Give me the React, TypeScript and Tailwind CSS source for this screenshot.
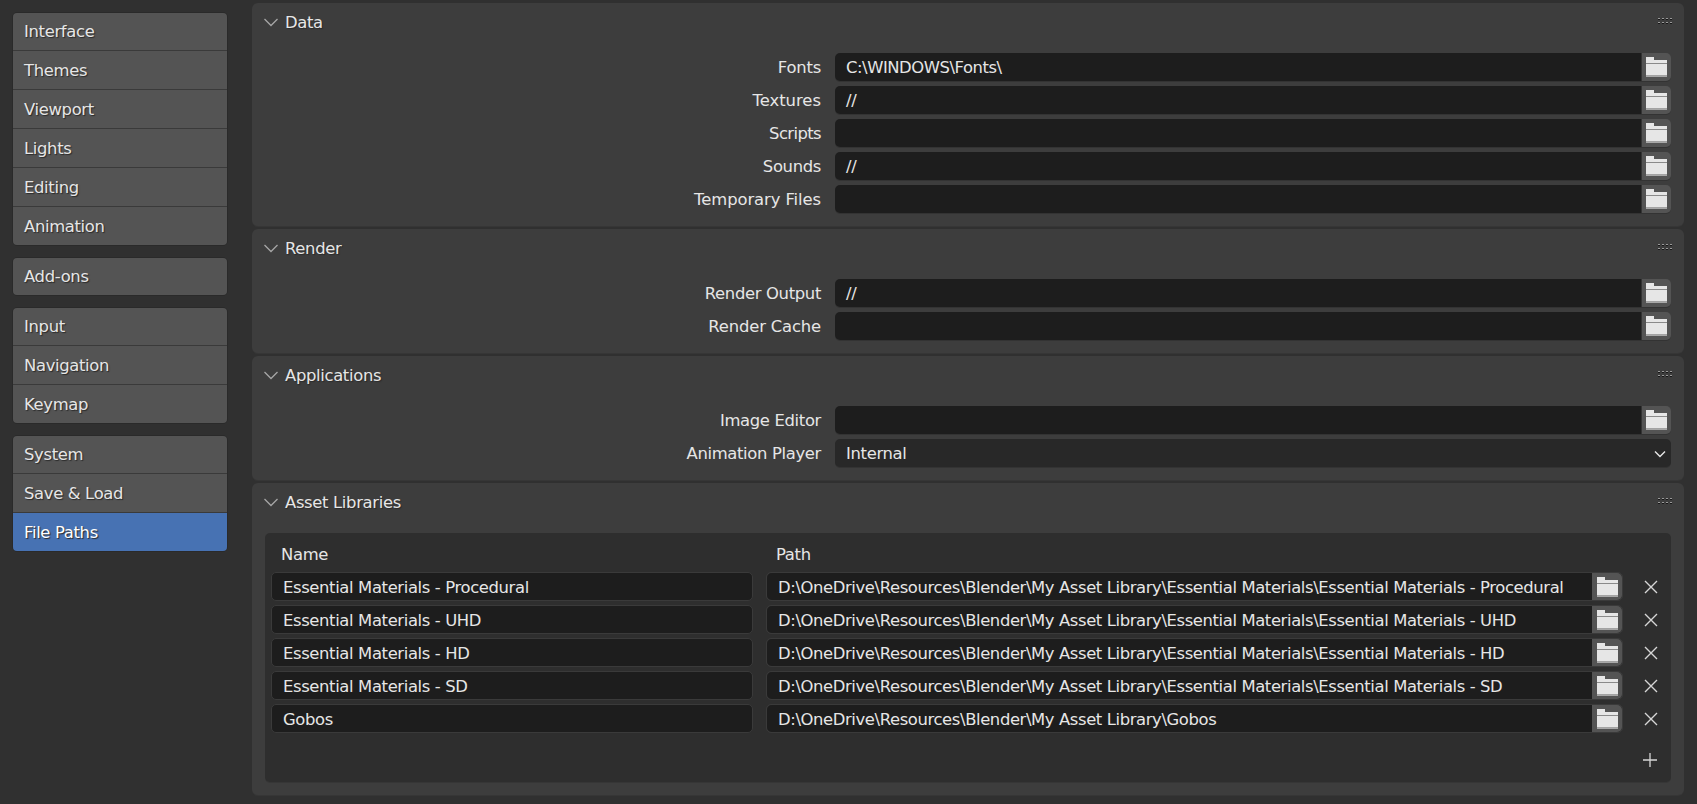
const font = "[font-family:'DejaVu_Sans',sans-serif] tracking-[-0.33px]";

function Folder() {
  return (
    <svg width="21" height="20" viewBox="0 0 21 20" className="block">
      <path d="M0 0h8v3h13v3H0z" fill="#e6e6e6" />
      <path d="M0 7h21v11.5H0z" fill="#e6e6e6" />
      <path d="M0 18.5h21V20H0z" fill="#a8a8a8" />
      <path d="M0 6h21v1H0z" fill="#8a8a8a" />
    </svg>
  );
}

function Chevron() {
  return (
    <svg width="14" height="9" viewBox="0 0 14 9" className="block" fill="none">
      <path d="M0.5 1l6.5 6.5L13.5 1" stroke="#a6a6a6" strokeWidth="1.3" />
    </svg>
  );
}

function Grip() {
  const xs = [0, 4, 8, 12];
  return (
    <svg width="14" height="7" viewBox="0 0 14 7" className="block">
      {xs.map((x) => (
        <g key={x}>
          <rect x={x} y={0} width={2} height={1} fill="#9a9a9a" />
          <rect x={x} y={1} width={2} height={1} fill="#161616" />
          <rect x={x} y={4} width={2} height={1} fill="#9a9a9a" />
          <rect x={x} y={5} width={2} height={1} fill="#161616" />
        </g>
      ))}
    </svg>
  );
}

function Cross() {
  return (
    <svg width="14" height="14" viewBox="0 0 14 14" fill="none" className="block">
      <path d="M1 1l12 12M13 1L1 13" stroke="#d6d6d6" strokeWidth="1.4" />
    </svg>
  );
}

function Plus() {
  return (
    <svg width="14" height="14" viewBox="0 0 14 14" fill="none" className="block">
      <path d="M7 0v14M0 7h14" stroke="#d6d6d6" strokeWidth="1.3" />
    </svg>
  );
}

function NavGroup({ items, active }: { items: string[]; active?: string }) {
  return (
    <div className="flex flex-col rounded-[5px] overflow-hidden border border-[#2a2a2a] w-[216px]">
      {items.map((t, i) => (
        <div
          key={t}
          className={`${i === 0 ? "h-[37px]" : "h-[39px] border-t border-[#3a3a3a]"} flex items-center pl-[11px] pt-[2px] text-[16.4px] [text-shadow:1px_1px_1px_#2a2a2a] ${
            t === active ? "bg-[#4772b3] text-white" : "bg-[#545454] text-[#e6e6e6]"
          }`}
        >
          {t}
        </div>
      ))}
    </div>
  );
}

function PathField({ value, track = "" }: { value: string; track?: string }) {
  return (
    <div className="flex h-[28px] flex-1 shadow-[0_1px_0_#333333] rounded-[5px]">
      <div className={`flex-1 bg-[#1d1d1d] rounded-l-[5px] flex items-center pl-[11px] pt-[2px] text-[16.4px] text-[#e6e6e6] whitespace-nowrap overflow-hidden ${track}`}>
        {value}
      </div>
      <div className="w-[30px] bg-[#545454] border-l border-[#333333] rounded-r-[5px] flex items-center justify-center">
        <Folder />
      </div>
    </div>
  );
}

function Row({ label, track = "", children }: { label: string; track?: string; children: React.ReactNode }) {
  return (
    <div className="flex items-center gap-[14px] h-[28px]">
      <div className={`w-[569px] pt-[2px] text-right text-[16.4px] text-[#e6e6e6] whitespace-nowrap ${track}`}>{label}</div>
      {children}
    </div>
  );
}

function Panel({ title, children }: { title: string; children: React.ReactNode }) {
  return (
    <section className="bg-[#3d3d3d] rounded-[6px] pb-[13px] shadow-[0_1px_0_#363636]">
      <header className="h-[50px] flex pt-[8px] pl-[12px] pr-[12px]">
        <div className="h-[22px] flex items-center gap-[7px] flex-1">
          <Chevron />
          <span className="pt-[2px] text-[16.4px] text-[#e6e6e6] [text-shadow:1px_1px_1px_#2a2a2a]">{title}</span>
        </div>
        <div className="pt-[7px]">
          <Grip />
        </div>
      </header>
      <div className="flex flex-col gap-[5px] pr-[13px]">{children}</div>
    </section>
  );
}

const libraries = [
  ["Essential Materials - Procedural", "D:\\OneDrive\\Resources\\Blender\\My Asset Library\\Essential Materials\\Essential Materials - Procedural"],
  ["Essential Materials - UHD", "D:\\OneDrive\\Resources\\Blender\\My Asset Library\\Essential Materials\\Essential Materials - UHD"],
  ["Essential Materials - HD", "D:\\OneDrive\\Resources\\Blender\\My Asset Library\\Essential Materials\\Essential Materials - HD"],
  ["Essential Materials - SD", "D:\\OneDrive\\Resources\\Blender\\My Asset Library\\Essential Materials\\Essential Materials - SD"],
  ["Gobos", "D:\\OneDrive\\Resources\\Blender\\My Asset Library\\Gobos"],
];

export default function App() {
  return (
    <div className={`w-[1697px] h-[804px] overflow-hidden bg-[#303030] flex ${font}`}>
      <aside className="w-[252px] shrink-0 pl-[12px] pt-[12px] flex flex-col gap-[11px]">
        <NavGroup items={["Interface", "Themes", "Viewport", "Lights", "Editing", "Animation"]} />
        <NavGroup items={["Add-ons"]} />
        <NavGroup items={["Input", "Navigation", "Keymap"]} />
        <NavGroup items={["System", "Save & Load", "File Paths"]} active="File Paths" />
      </aside>
      <main className="w-[1432px] pt-[3px] flex flex-col gap-[3px]">
        <Panel title="Data">
          <Row label="Fonts" track="tracking-[-0.2px]"><PathField value="C:\WINDOWS\Fonts\" track="tracking-[-0.45px]" /></Row>
          <Row label="Textures" track="tracking-[0px]"><PathField value="//" /></Row>
          <Row label="Scripts" track="tracking-[-0.6px]"><PathField value="" /></Row>
          <Row label="Sounds"><PathField value="//" /></Row>
          <Row label="Temporary Files" track="tracking-[-0.08px]"><PathField value="" /></Row>
        </Panel>
        <Panel title="Render">
          <Row label="Render Output"><PathField value="//" /></Row>
          <Row label="Render Cache" track="tracking-[-0.15px]"><PathField value="" /></Row>
        </Panel>
        <Panel title="Applications">
          <Row label="Image Editor"><PathField value="" /></Row>
          <Row label="Animation Player">
            <div className="flex-1 h-[28px] bg-[#282828] rounded-[5px] shadow-[0_1px_0_#333333] flex items-center justify-between pl-[11px] pr-[5px] pt-[2px] text-[16.4px] text-[#e6e6e6]">
              Internal
              <svg width="12" height="8" viewBox="0 0 12 8" fill="none" className="block">
                <path d="M1 1.5l5 5 5-5" stroke="#e6e6e6" strokeWidth="1.4" />
              </svg>
            </div>
          </Row>
        </Panel>
        <Panel title="Asset Libraries">
          <div className="ml-[13px] bg-[#2e2e2e] rounded-[5px] h-[249px] flex flex-col shadow-[0_1px_0_#363636]">
            <div className="h-[39px] flex items-end pb-[4px] text-[16.4px] text-[#e6e6e6]">
              <div className="w-[511px] pl-[16px]">Name</div>
              <div>Path</div>
            </div>
            <div className="flex flex-col gap-[4px] pl-[6px] tracking-[-0.36px]">
              {libraries.map(([name, path]) => (
                <div key={name} className="flex items-center h-[29px]">
                  <div className="w-[482px] shrink-0 h-[29px] bg-[#1d1d1d] border border-[#3a3a3a] rounded-[5px] flex items-center pl-[11px] pt-[4px] text-[16.4px] text-[#e6e6e6] whitespace-nowrap">
                    {name}
                  </div>
                  <div className="ml-[13px] w-[857px] shrink-0 h-[29px] flex border border-[#3a3a3a] rounded-[5px]">
                    <div className="flex-1 bg-[#1d1d1d] rounded-l-[5px] flex items-center pl-[11px] pt-[4px] text-[16.4px] text-[#e6e6e6] whitespace-nowrap overflow-hidden tracking-[-0.38px]">
                      {path}
                    </div>
                    <div className="w-[30px] bg-[#545454] rounded-r-[5px] flex items-center justify-center">
                      <Folder />
                    </div>
                  </div>
                  <div className="w-[48px] shrink-0 pl-[7px] flex justify-center">
                    <Cross />
                  </div>
                </div>
              ))}
            </div>
            <div className="flex justify-end pt-[20px] pr-[14px]">
              <Plus />
            </div>
          </div>
        </Panel>
      </main>
    </div>
  );
}
